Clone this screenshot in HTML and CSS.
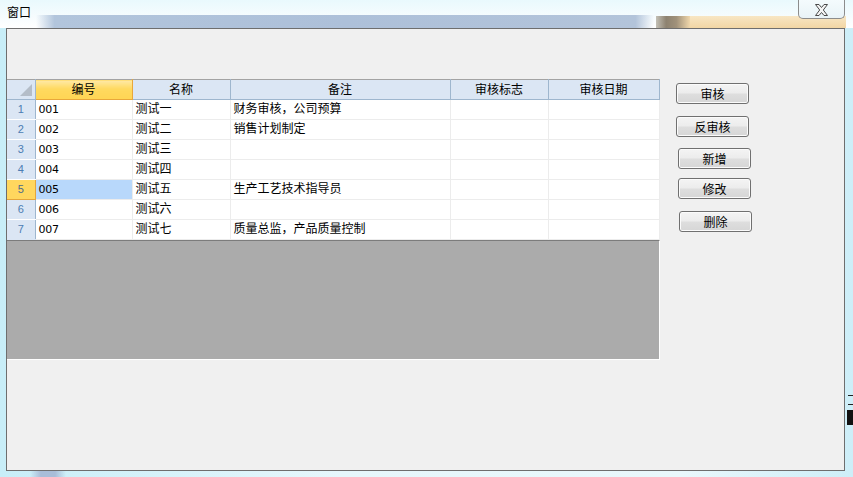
FILE: index.html
```html
<!DOCTYPE html>
<html lang="zh-CN">
<head>
<meta charset="utf-8">
<title>窗口</title>
<link rel="stylesheet" href="styles.css">
</head>
<body>
<div class="frame">
  <div class="titlebar">
    <span class="title">窗口</span>
    <button class="close" aria-label="关闭">
      <svg width="15" height="12" viewBox="0 0 15 12"><path d="M1.5 0.5h3.5l2.5 3 2.5-3h3.5l-4.2 5.5 4.2 5.5h-3.5l-2.5-3-2.5 3h-3.5l4.2-5.5z" fill="#f4f4f4" stroke="#4a4a4a" stroke-width="1" stroke-linejoin="round"/></svg>
    </button>
  </div>
  <div class="client">
    <div class="content">
      <div class="grid">
        <table class="sheet">
          <colgroup>
            <col class="c-rh"><col class="c-1"><col class="c-2"><col class="c-3"><col class="c-4"><col class="c-5">
          </colgroup>
          <thead>
            <tr>
              <th class="corner"><span class="tri"></span></th>
              <th class="hsel">编号</th>
              <th>名称</th>
              <th>备注</th>
              <th>审核标志</th>
              <th>审核日期</th>
            </tr>
          </thead>
          <tbody>
            <tr><td class="rh">1</td><td class="num">001</td><td>测试一</td><td>财务审核，公司预算</td><td></td><td></td></tr>
            <tr><td class="rh">2</td><td class="num">002</td><td>测试二</td><td>销售计划制定</td><td></td><td></td></tr>
            <tr><td class="rh">3</td><td class="num">003</td><td>测试三</td><td></td><td></td><td></td></tr>
            <tr><td class="rh">4</td><td class="num">004</td><td>测试四</td><td></td><td></td><td></td></tr>
            <tr><td class="rh rsel">5</td><td class="num csel">005</td><td>测试五</td><td>生产工艺技术指导员</td><td></td><td></td></tr>
            <tr><td class="rh">6</td><td class="num">006</td><td>测试六</td><td></td><td></td><td></td></tr>
            <tr><td class="rh">7</td><td class="num">007</td><td>测试七</td><td>质量总监，产品质量控制</td><td></td><td></td></tr>
          </tbody>
        </table>
        <div class="empty"></div>
      </div>
      <div class="actions">
        <button class="btn">审核</button>
        <button class="btn b2">反审核</button>
        <button class="btn b3">新增</button>
        <button class="btn b4">修改</button>
        <button class="btn b5">删除</button>
      </div>
    </div>
  </div>
</div>
</body>
</html>
```

FILE: styles.css
```css
* { box-sizing: border-box; }

html, body {
  margin: 0;
  padding: 0;
}

body {
  width: 853px;
  height: 477px;
  overflow: hidden;
  font-family: "Liberation Sans", "Noto Sans CJK SC", sans-serif;
  font-size: 12px;
  color: #000;
  background:
    linear-gradient(#111, #111) 847px 410px / 6px 15px no-repeat,
    linear-gradient(#222, #222) 848px 395px / 5px 1px no-repeat,
    linear-gradient(#222, #222) 848px 404px / 5px 1px no-repeat,
    linear-gradient(90deg, rgba(160,185,215,0) 0, #a9bdd8 30%, #a9bdd8 70%, rgba(160,185,215,0) 100%) 30px 471px / 36px 6px no-repeat,
    linear-gradient(90deg, #c8eef8, #e6f7fc 40%, #e9f8fc 80%, #cdeef8);
}

.frame {
  width: 853px;
  height: 477px;
}

.titlebar {
  height: 28px;
  display: flex;
  align-items: flex-start;
  background:
    linear-gradient(90deg, rgba(176,196,222,0), #b2c5dc 3%, #adc0d9 50%, #b3c4da 97%, rgba(176,196,222,0)) 36px 15px / 618px 13px no-repeat,
    linear-gradient(90deg, #c3c0b6, #8d8270 30%, #a0917a 60%, #f0d7ab) 656px 16px / 34px 12px no-repeat,
    linear-gradient(#f8e6c4, #f2d6a4) 690px 16px / 156px 12px no-repeat,
    linear-gradient(#e9f9fd, #f6fcfe 60%, #ffffff);
}

.title {
  padding: 5px 0 0 7px;
  line-height: 14px;
  font-size: 12px;
  font-family: "Noto Sans CJK SC", sans-serif;
}

.close {
  margin: 0 8px 0 auto;
  width: 47px;
  height: 19px;
  padding: 0;
  border: 1px solid #8c8c8c;
  border-top: none;
  border-radius: 0 0 5px 5px;
  background: linear-gradient(#f4fbfd, #e9f3f7);
  display: flex;
  align-items: center;
  justify-content: center;
}
.close svg { display: block; margin-top: 1px; }

.client {
  margin-left: 6px;
  width: 839px;
  height: 443px;
  border: 1px solid #6e6e6e;
  background: #f0f0f0;
}

.content {
  display: flex;
  align-items: flex-start;
  padding-top: 50px;
}

.grid {
  width: 653px;
  display: flex;
  flex-direction: column;
}

.sheet {
  border-collapse: collapse;
  table-layout: fixed;
  width: 652px;
  border-top: 1px solid #a3a3a3;
}

.c-rh { width: 28px; }
.c-1 { width: 97px; }
.c-2 { width: 98px; }
.c-3 { width: 220px; }
.c-4 { width: 98px; }
.c-5 { width: 111px; }

.sheet th {
  height: 20px;
  padding: 0;
  font-weight: normal;
  text-align: center;
  background: #dbe6f4;
  border-right: 1px solid #9eb6ce;
  border-bottom: 1px solid #9eb6ce;
  line-height: 18px;
  font-size: 12px;
}

.sheet th.corner {
  position: relative;
  border-right: 1px solid #9eb6ce;
}
.tri {
  position: absolute;
  right: 3px;
  bottom: 3px;
  width: 0;
  height: 0;
  border-left: 12px solid transparent;
  border-bottom: 12px solid #b4bdc8;
}

.sheet th.hsel {
  background: linear-gradient(#ffe9a6, #ffd95f 45%, #ffd554);
  border: 1px solid #e9a73a;
  border-top: none;
}

.sheet td {
  height: 20px;
  padding: 0 0 0 3px;
  background: #fff;
  border-right: 1px solid #ececec;
  border-bottom: 1px solid #ececec;
  line-height: 19px;
  white-space: nowrap;
  overflow: hidden;
}

.sheet td.num {
  font-family: "DejaVu Sans", sans-serif;
  font-size: 11px;
  letter-spacing: -0.3px;
}

.sheet td.rh {
  padding: 0;
  text-align: center;
  background: #dbe6f4;
  color: #4c7db3;
  font-size: 11px;
  border-right: 1px solid #9eb6ce;
  border-bottom: 1px solid #ffffff;
}
.sheet tr:last-child td.rh { border-bottom-color: #dbe6f4; }

.sheet td.rsel {
  background: #ffd75e;
  color: #4c6a8a;
  border: 1px solid #e4a53a;
  border-left: none;
}

.sheet td.csel {
  background: #b8d8fb;
}

.empty {
  height: 120px;
  width: 653px;
  background: #ababab;
  border-top: 1px solid #7c7c7c;
  border-bottom: 1px solid #ffffff;
  border-right: 1px solid #ffffff;
}

.actions {
  display: flex;
  flex-direction: column;
  align-items: flex-start;
  margin-left: 16px;
  padding-top: 4px;
}

.btn {
  width: 73px;
  height: 21px;
  padding: 0;
  border: 1px solid #707070;
  border-radius: 3px;
  background: linear-gradient(#f4f4f4, #ececec 48%, #dedede 52%, #d6d6d6);
  box-shadow: inset 0 0 0 1px #fbfbfb;
  font-family: "Noto Sans CJK SC", sans-serif;
  font-size: 12px;
  line-height: 17px;
  color: #000;
}

.b2 { margin-top: 12px; }
.b3 { margin-top: 11px; margin-left: 2px; }
.b4 { margin-top: 9px; margin-left: 2px; }
.b5 { margin-top: 12px; margin-left: 3px; }
```
